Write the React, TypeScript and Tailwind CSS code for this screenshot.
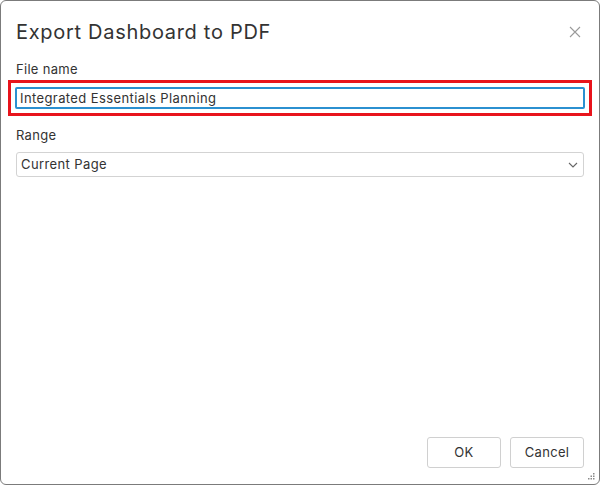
import React, { useState } from 'react';

export default function App() {
  const [fileName, setFileName] = useState('Integrated Essentials Planning');
  const [range, setRange] = useState('Current Page');

  return (
    <div
      className="w-[600px] h-[485px] bg-white border border-[#7b7b7b] rounded-[6px] flex flex-col relative text-[#333333]"
      style={{ fontFamily: 'Inter, "Noto Sans", sans-serif' }}
    >
      {/* Header */}
      <div className="flex items-start justify-between pl-[15px] pr-[18px] pt-[16px]">
        <h1 className="text-[20px] leading-[30px] font-normal tracking-[0.7px]">Export Dashboard to PDF</h1>
        <button className="mt-[9px] text-[#9a9a9a]" aria-label="Close">
          <svg width="12" height="12" viewBox="0 0 12 12" fill="none" stroke="currentColor" strokeWidth="1.1">
            <path d="M1 1L11 11M11 1L1 11" />
          </svg>
        </button>
      </div>

      {/* Body */}
      <div className="flex flex-col px-[15px] pt-[13px] flex-1">
        <label className="text-[13px] leading-[18px] mb-[2px] tracking-[0.3px]">File name</label>
        <div className="-mx-[8px] border-[3px] border-[#e8141c] p-[4px]">
          <input
            value={fileName}
            onChange={(e) => setFileName(e.target.value)}
            className="block w-full h-[22px] border-2 border-[#2b90d0] rounded-[2px] px-[3px] text-[13px] tracking-[0.4px] outline-none text-[#333333]"
          />
        </div>

        <label className="text-[13px] leading-[18px] mt-[10px] mb-[8px] tracking-[0.3px]">Range</label>
        <div className="relative">
          <select
            value={range}
            onChange={(e) => setRange(e.target.value)}
            className="block w-full h-[25px] appearance-none border border-[#d3d3d3] rounded-[3px] pl-[4px] text-[13px] tracking-[0.4px] outline-none bg-white text-[#333333]"
          >
            <option>Current Page</option>
            <option>All Pages</option>
          </select>
          <svg
            className="absolute right-[6px] top-[10px] pointer-events-none text-[#666666]"
            width="10"
            height="6"
            viewBox="0 0 10 6"
            fill="none"
            stroke="currentColor"
            strokeWidth="1.1"
          >
            <path d="M1 1L5 5L9 1" />
          </svg>
        </div>

        <div className="flex-1" />

        {/* Footer */}
        <div className="flex justify-end gap-[9px] pb-[16px]">
          <button className="w-[74px] h-[31px] border border-[#d0d0d0] rounded-[3px] text-[13px] tracking-[0.3px] bg-white">OK</button>
          <button className="w-[74px] h-[31px] border border-[#d0d0d0] rounded-[3px] text-[13px] tracking-[0.3px] bg-white">Cancel</button>
        </div>
      </div>

      {/* Resize grip */}
      <svg className="absolute right-[4px] bottom-[4px]" width="7" height="7" viewBox="0 0 7 7" fill="#8a8a8a">
        <rect x="5" y="0" width="1.5" height="1.5" />
        <rect x="2.5" y="2.5" width="1.5" height="1.5" />
        <rect x="5" y="2.5" width="1.5" height="1.5" />
        <rect x="0" y="5" width="1.5" height="1.5" />
        <rect x="2.5" y="5" width="1.5" height="1.5" />
        <rect x="5" y="5" width="1.5" height="1.5" />
      </svg>
    </div>
  );
}
